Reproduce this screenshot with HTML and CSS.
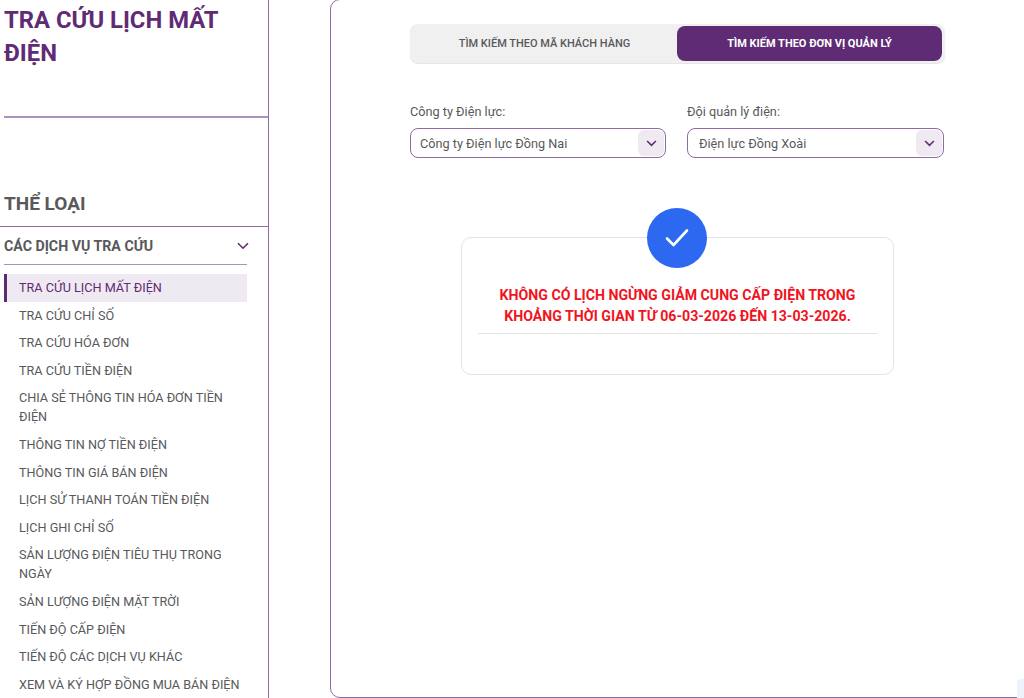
FILE: index.html
```html
<!DOCTYPE html>
<html lang="vi">
<head>
  <meta charset="UTF-8">
  <meta name="viewport" content="width=device-width, initial-scale=1.0">
  <title>Tra cứu lịch mất điện</title>
  <link rel="stylesheet" href="styles.css">
</head>
<body>
  <div class="page">
    <aside class="sidebar">
      <h1 class="page-title">TRA CỨU LỊCH MẤT ĐIỆN</h1>
      <h2 class="cat-title">THỂ LOẠI</h2>
      <div class="group-head">
        <span>CÁC DỊCH VỤ TRA CỨU</span>
        <svg class="group-arrow" viewBox="0 0 12 8" width="12" height="8"><path d="M1 1.2 6 6.2 11 1.2" fill="none" stroke="#5f2b74" stroke-width="1.6"/></svg>
      </div>
      <ul class="menu">
        <li class="active">TRA CỨU LỊCH MẤT ĐIỆN</li>
        <li>TRA CỨU CHỈ SỐ</li>
        <li>TRA CỨU HÓA ĐƠN</li>
        <li>TRA CỨU TIỀN ĐIỆN</li>
        <li>CHIA SẺ THÔNG TIN HÓA ĐƠN TIỀN ĐIỆN</li>
        <li>THÔNG TIN NỢ TIỀN ĐIỆN</li>
        <li>THÔNG TIN GIÁ BÁN ĐIỆN</li>
        <li>LỊCH SỬ THANH TOÁN TIỀN ĐIỆN</li>
        <li>LỊCH GHI CHỈ SỐ</li>
        <li>SẢN LƯỢNG ĐIỆN TIÊU THỤ TRONG NGÀY</li>
        <li>SẢN LƯỢNG ĐIỆN MẶT TRỜI</li>
        <li>TIẾN ĐỘ CẤP ĐIỆN</li>
        <li>TIẾN ĐỘ CÁC DỊCH VỤ KHÁC</li>
        <li>XEM VÀ KÝ HỢP ĐỒNG MUA BÁN ĐIỆN</li>
      </ul>
    </aside>

    <main class="card">
      <div class="tabs">
        <button class="tab">TÌM KIẾM THEO MÃ KHÁCH HÀNG</button>
        <button class="tab selected">TÌM KIẾM THEO ĐƠN VỊ QUẢN LÝ</button>
      </div>

      <div class="fields">
        <div class="field">
          <label>Công ty Điện lực:</label>
          <div class="select">
            <span>Công ty Điện lực Đồng Nai</span>
            <span class="select-btn"><svg viewBox="0 0 12 8" width="11" height="7"><path d="M1 1.2 6 6.2 11 1.2" fill="none" stroke="#5f2b74" stroke-width="1.8"/></svg></span>
          </div>
        </div>
        <div class="field">
          <label>Đội quản lý điện:</label>
          <div class="select">
            <span>Điện lực Đồng Xoài</span>
            <span class="select-btn"><svg viewBox="0 0 12 8" width="11" height="7"><path d="M1 1.2 6 6.2 11 1.2" fill="none" stroke="#5f2b74" stroke-width="1.8"/></svg></span>
          </div>
        </div>
      </div>

      <div class="notice">
        <div class="notice-icon">
          <svg viewBox="0 0 24 20" width="24" height="20"><path d="M2 10.5 8.5 17 22 2.5" fill="none" stroke="#fff" stroke-width="2.6" stroke-linecap="round" stroke-linejoin="round"/></svg>
        </div>
        <p class="notice-text">KHÔNG CÓ LỊCH NGỪNG GIẢM CUNG CẤP ĐIỆN TRONG KHOẢNG THỜI GIAN TỪ 06-03-2026 ĐẾN 13-03-2026.</p>
        <div class="notice-line"></div>
      </div>
    </main>
  </div>
  <div class="corner-tab"></div>
</body>
</html>
```

FILE: styles.css
```css
html, body { margin: 0; height: 698px; overflow: hidden; }
body { font-family: Roboto, "Liberation Sans", sans-serif; background: #fff; color: #58595b; }
.page { display: flex; align-items: flex-start; height: 698px; }

.sidebar { box-sizing: border-box; width: 269px; height: 698px; flex: none; border-right: 1px solid #8e6ba3; padding-left: 4px; overflow: hidden; }
.page-title { box-sizing: border-box; margin: 4px 0 0; height: 114px; border-bottom: 2px solid #ab92bc; font-size: 23.8px; line-height: 33px; font-weight: 700; color: #5f2b74; }
.cat-title { margin: 69px 0 0 -4px; height: 39px; line-height: 34px; font-size: 19px; font-weight: 700; color: #58595b; border-bottom: 1px solid #8e6ba3; padding-left: 4px; }
.group-head { display: flex; justify-content: space-between; align-items: center; width: 243px; height: 37px; border-bottom: 1px solid #ab92bc; font-size: 14.2px; font-weight: 700; }
.group-arrow { margin-right: -2px; }
.menu { list-style: none; margin: 9px 0 0; padding: 0; width: 243px; font-size: 12.65px; line-height: 19px; }
.menu li { padding: 4px 5px 4.6px 15px; }
.menu .active { background: #efe9f1; color: #5f2b74; border-left: 3px solid #5f2b74; padding-left: 12px; }

.card { box-sizing: border-box; flex: none; width: 720px; height: 699px; margin: -1px 0 0 61px; border: 1px solid #8e6ba3; border-radius: 10px; padding: 24px 0 0 79px; }
.tabs { display: flex; box-sizing: border-box; width: 535px; height: 39px; padding: 2px 3px 2px 2px; background: #f0f0f0; border-radius: 8px; box-shadow: 0 1px 1px #e4e4e4; }
.tab { flex: 1; border: 0; border-radius: 8px; background: transparent; font-family: inherit; font-size: 11px; font-weight: 500; color: #58595b; padding: 0; }
.tab.selected { flex: none; width: 265px; background: #5f2b74; color: #fff; font-weight: 700; }

.fields { display: grid; grid-template-columns: 256px 257px; gap: 21px; margin-top: 41px; }
.field label { display: block; font-size: 12.7px; line-height: 16px; margin-bottom: 8px; }
.select { box-sizing: border-box; display: flex; justify-content: space-between; align-items: center; height: 30px; padding: 0 1px 0 9px; border: 1px solid #8e6ba3; border-radius: 8px; font-size: 12.7px; }
.field + .field .select { padding-left: 11px; }
.select-btn { display: flex; align-items: center; justify-content: center; width: 26px; height: 26px; border-radius: 6px; background: #efe9f1; }

.notice { position: relative; box-sizing: border-box; width: 433px; height: 138px; margin: 79px 0 0 51px; padding: 47px 16px 0; border: 1px solid #e3e3e3; border-radius: 10px; }
.notice-icon { position: absolute; top: -30px; left: 185px; display: flex; align-items: center; justify-content: center; width: 60px; height: 60px; border-radius: 50%; background: #2d69f0; }
.notice-text { margin: 0; font-size: 14.15px; line-height: 21px; font-weight: 700; color: #f0141e; text-align: center; }
.notice-line { height: 1px; margin-top: 6px; background: #e3e3e3; }

.corner-tab { position: fixed; right: 0; bottom: 0; width: 7px; height: 19px; border-top-left-radius: 4px; background: #eef3fb; }
```
